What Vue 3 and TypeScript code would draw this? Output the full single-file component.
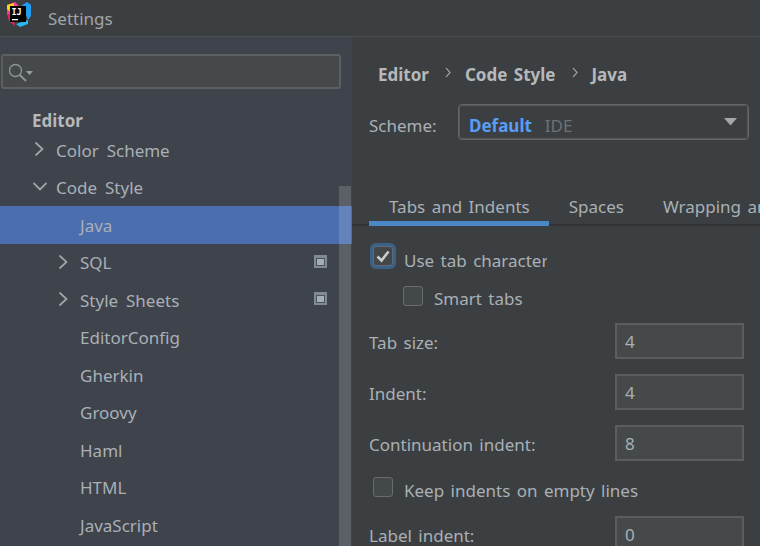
<script setup lang="ts">
interface TreeRow { label: string; level: number; arrow?: 'right' | 'down'; selected?: boolean; badge?: boolean }
const rows: TreeRow[] = [
  { label: 'Color Scheme', level: 0, arrow: 'right' },
  { label: 'Code Style', level: 0, arrow: 'down' },
  { label: 'Java', level: 1, selected: true },
  { label: 'SQL', level: 1, arrow: 'right', badge: true },
  { label: 'Style Sheets', level: 1, arrow: 'right', badge: true },
  { label: 'EditorConfig', level: 1 },
  { label: 'Gherkin', level: 1 },
  { label: 'Groovy', level: 1 },
  { label: 'Haml', level: 1 },
  { label: 'HTML', level: 1 },
  { label: 'JavaScript', level: 1 },
]
</script>

<template>
  <div class="window">
    <header class="titlebar">
      <svg class="logo" width="26" height="26" viewBox="0 0 26 26">
        <polygon points="1,3 9,0 13,4 4,14 1,12" fill="#fc3d8c" />
        <polygon points="1,3 8,1 8,5 3,9 1,7" fill="#fcd21c" />
        <polygon points="15,4 21,0 25,3 25,14 22,18 19,10" fill="#1f9df2" />
        <polygon points="1,12 7,12 9,24 3,19" fill="#e9205f" />
        <polygon points="3,16 7,14 8,20 5,19" fill="#a93bc9" />
        <polygon points="10,22 22,18 22,22 14,25" fill="#29b9f0" />
        <rect x="4" y="4" width="16" height="16" fill="#000" />
        <text x="5.500" y="13" class="logo-text">IJ</text>
        <rect x="6" y="17" width="6" height="1.300" fill="#fff" />
      </svg>
      <span class="title">Settings</span>
    </header>
    <div class="body">
      <aside class="sidebar">
        <div class="search">
          <svg width="26" height="22" viewBox="0 0 26 22" class="search-icon">
            <circle cx="6.500" cy="9.500" r="6" fill="none" stroke="#8f9496" stroke-width="1.300" />
            <path d="M10.800 14 L17 20" stroke="#8f9496" stroke-width="1.800" fill="none" />
            <path d="M17 10 H24 L20.500 14 Z" fill="#9a9da0" />
          </svg>
        </div>
        <div class="group">Editor</div>
        <ul class="tree">
          <li v-for="row in rows" :key="row.label" class="row" :class="[`level-${row.level}`, { selected: row.selected }]">
            <svg v-if="row.arrow" class="arrow" width="14" height="14" viewBox="0 0 14 14">
              <path v-if="row.arrow === 'right'" d="M2.500 .500 L9.500 7 L2.500 13.500" fill="none" stroke="#a0a4a6" stroke-width="1.800" />
              <path v-else d="M.500 3 L7 9.500 L13.500 3" fill="none" stroke="#a0a4a6" stroke-width="1.800" />
            </svg>
            <span class="row-label">{{ row.label }}</span>
            <span v-if="row.badge" class="badge"><i></i></span>
          </li>
        </ul>
        <div class="scrollbar"></div>
      </aside>
      <main class="content">
        <nav class="crumbs">
          <span>Editor</span>
          <svg width="9" height="11" viewBox="0 0 9 11"><path d="M4 1 L8 5.500 L4 10" fill="none" stroke="#b4b6b8" stroke-width="1.100" /></svg>
          <span>Code Style</span>
          <svg width="9" height="11" viewBox="0 0 9 11"><path d="M4 1 L8 5.500 L4 10" fill="none" stroke="#b4b6b8" stroke-width="1.100" /></svg>
          <span>Java</span>
        </nav>
        <div class="scheme">
          <span class="scheme-label">Scheme:</span>
          <div class="select">
            <b>Default</b><span class="ide">IDE</span>
            <svg class="caret" width="13" height="8" viewBox="0 0 13 8"><path d="M0 0 H13 L6.500 7.500 Z" fill="#a4a6a8" /></svg>
          </div>
        </div>
        <div class="tabs">
          <span class="tab active">Tabs and Indents</span>
          <span class="tab">Spaces</span>
          <span class="tab">Wrapping and Braces</span>
        </div>
        <section class="form">
          <label class="check first">
            <span class="box focused">
              <svg width="14" height="13" viewBox="0 0 14 13"><path d="M1.500 6.500 L5.500 10.500 L12.500 1.500" fill="none" stroke="#c9cbcc" stroke-width="2.600" /></svg>
            </span>
            <span class="clip">Use tab character</span>
          </label>
          <label class="check smart"><span class="box"></span><span>Smart tabs</span></label>
          <div class="field f1"><span>Tab size:</span><div class="input">4</div></div>
          <div class="field"><span>Indent:</span><div class="input">4</div></div>
          <div class="field"><span>Continuation indent:</span><div class="input">8</div></div>
          <label class="check keep"><span class="box"></span><span>Keep indents on empty lines</span></label>
          <div class="field last"><span>Label indent:</span><div class="input">0</div></div>
        </section>
      </main>
    </div>
  </div>
</template>

<style>
html, body { margin: 0; padding: 0; background: #3c3f41; }
</style>

<style scoped>
.window {
  width: 760px;
  height: 546px;
  overflow: hidden;
  background: #3c3f41;
  color: #a9b0b6;
  font-family: "Noto Sans", "Open Sans", sans-serif;
  font-size: 17px;
  word-spacing: 2px;
  display: flex;
  flex-direction: column;
}
.titlebar {
  height: 37px;
  flex: none;
  box-sizing: border-box;
  border-bottom: 1px solid #4c4e50;
  display: flex;
  align-items: center;
  padding-left: 6px;
}
.logo { flex: none; margin-top: -6px; }
.logo-text { font: 700 8.500px "DejaVu Sans Mono", monospace; fill: #fff; }
.title { margin-left: 16px; color: #a1a5a8; font-size: 17px; }
.body { flex: 1; display: flex; min-height: 0; }
.sidebar {
  width: 352px;
  flex: none;
  background: #3f434c;
  position: relative;
  overflow: hidden;
  word-spacing: 3.500px;
}
.search {
  margin: 17px 11px 0 1px;
  height: 35px;
  box-sizing: border-box;
  border: 2px solid #5d5f60;
  border-radius: 3px;
  background: #45494a;
  display: flex;
  align-items: center;
  padding-left: 6px;
}
.search-icon { margin-top: 1px; }
.group {
  margin: 20px 0 0 32px;
  height: 22px;
  line-height: 23px;
  font-weight: 700;
  font-size: 17px;
  color: #b4b8ba;
}
.tree { list-style: none; margin: 0; padding: 0; }
.row {
  height: 37.500px;
  display: flex;
  align-items: center;
  position: relative;
  box-sizing: border-box;
  white-space: nowrap;
}
.row.selected { background: #4b6eaf; }
.level-0 { padding-left: 56px; }
.level-1 { padding-left: 80px; }
.arrow { position: absolute; top: 11px; }
.level-0 .arrow { left: 33px; }
.level-1 .arrow { left: 57px; }
.row-label { line-height: 1; padding-top: 1px; }
.badge {
  position: absolute;
  left: 314px;
  top: 11px;
  width: 13px;
  height: 13px;
  box-sizing: border-box;
  background: #7f8b91;
  padding: 4px 3px 3px;
  display: flex;
}
.badge i { flex: 1; background: #9fb0b8; outline: 1px solid #4d5459; }
.scrollbar {
  position: absolute;
  left: 339px;
  top: 149px;
  width: 12px;
  bottom: 0;
  background: rgba(255, 255, 255, .15);
}
.content { flex: 1; min-width: 0; overflow: hidden; position: relative; }
.crumbs {
  display: flex;
  align-items: center;
  gap: 13.500px;
  margin: 26px 0 0 26px;
  height: 23px;
  font-weight: 700;
  font-size: 17px;
  color: #b6b9bb;
  white-space: nowrap;
}
.crumbs svg { margin-top: -4px; }
.scheme { display: flex; align-items: center; margin: 18px 0 0 17px; }
.scheme-label { width: 89px; flex: none; padding-top: 7px; }
.select {
  position: relative;
  width: 291px;
  height: 36px;
  box-sizing: border-box;
  border: 1px solid #646669;
  outline: 1px solid #55575a;
  outline-offset: -2px;
  border-radius: 4px;
  display: flex;
  align-items: center;
  padding: 7px 0 0 10px;
  white-space: nowrap;
}
.select b { color: #589df6; font-weight: 700; }
.ide { margin-left: 13px; color: #6f7274; }
.caret { position: absolute; right: 11px; top: 13px; }
.tabs {
  display: flex;
  margin: 49px -2px 0 0;
  height: 37px;
  border-bottom: 2px solid #323232;
  box-sizing: border-box;
  white-space: nowrap;
  padding-left: 17px;
}
.tab { padding: 0 19px 0 20px; line-height: 36px; height: 37px; box-sizing: border-box; }
.tab.active { border-bottom: 5px solid #4a88c7; }
.form { position: relative; padding-left: 17px; }
.check { display: flex; align-items: center; }
.box {
  width: 20px;
  height: 20px;
  box-sizing: border-box;
  border: 1px solid #6b6b6b;
  border-radius: 3px;
  background: #43494a;
  flex: none;
  margin: -6px 11px 0 0;
  display: flex;
  align-items: center;
  justify-content: center;
}
.box.focused {
  box-shadow: 0 0 0 3px #3d6185;
  background: #43474a;
  border-color: #5a6d80;
}
.first { margin: 21px 0 0 4px; height: 24px; }
.clip { display: block; width: 143px; overflow: hidden; white-space: nowrap; padding-top: 2px; }
.smart { margin: 15px 0 0 34px; height: 24px; }
.smart .box { margin-top: -4px; }
.field { display: flex; align-items: center; justify-content: space-between; width: 375px; height: 36px; margin-top: 15px; }
.field > span { padding-top: 2px; }
.f1 { margin-top: 13px; }
.input {
  width: 129px;
  height: 36px;
  box-sizing: border-box;
  border: 2px solid #5b5d5e;
  background: #45494a;
  padding-left: 8px;
  line-height: 34px;
  flex: none;
}
.keep { margin: 17px 0 0 4px; height: 24px; }
.last { margin-top: 14px; }
</style>
